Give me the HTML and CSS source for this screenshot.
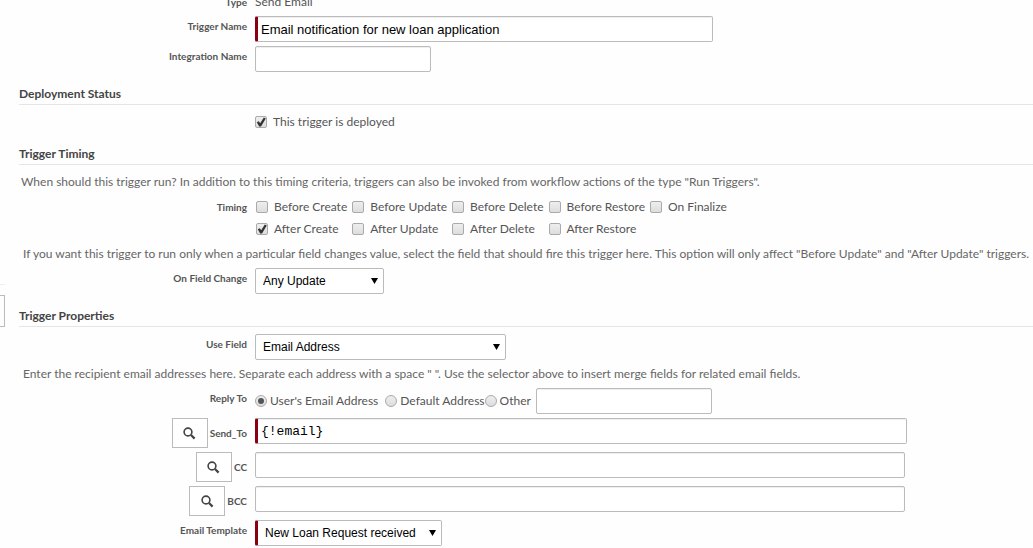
FILE: index.html
```html
<!DOCTYPE html>
<html lang="en">
<head>
<meta charset="utf-8">
<title>Trigger</title>
<link rel="stylesheet" href="styles.css">
</head>
<body>
<div class="page">
  <div class="rail"><div class="rail-box"></div></div>
  <form class="form">
    <div class="row type-row">
      <span class="label">Type</span>
      <span class="text">Send Email</span>
    </div>
    <div class="row">
      <label class="label" for="name">Trigger Name</label>
      <input class="input input-wide required" id="name" type="text" value="Email notification for new loan application">
    </div>
    <div class="row">
      <label class="label" for="integration">Integration Name</label>
      <input class="input input-short" id="integration" type="text">
    </div>

    <h2 class="heading">Deployment Status</h2>
    <div class="row deploy-row">
      <label class="option deploy"><input class="check" type="checkbox" checked>This trigger is deployed</label>
    </div>

    <h2 class="heading">Trigger Timing</h2>
    <p class="note note-first">When should this trigger run? In addition to this timing criteria, triggers can also be invoked from workflow actions of the type "Run Triggers".</p>
    <div class="row timing-row">
      <span class="label">Timing</span>
      <div class="timing">
        <label class="option"><input class="check" type="checkbox">Before Create</label>
        <label class="option"><input class="check" type="checkbox">Before Update</label>
        <label class="option"><input class="check" type="checkbox">Before Delete</label>
        <label class="option"><input class="check" type="checkbox">Before Restore</label>
        <label class="option"><input class="check" type="checkbox">On Finalize</label>
        <label class="option"><input class="check" type="checkbox" checked>After Create</label>
        <label class="option"><input class="check" type="checkbox">After Update</label>
        <label class="option"><input class="check" type="checkbox">After Delete</label>
        <label class="option"><input class="check" type="checkbox">After Restore</label>
      </div>
    </div>
    <p class="note">If you want this trigger to run only when a particular field changes value, select the field that should fire this trigger here. This option will only affect "Before Update" and "After Update" triggers.</p>
    <div class="row">
      <label class="label" for="change">On Field Change</label>
      <span class="drop drop-small"><select class="select" id="change"><option>Any Update</option></select></span>
    </div>

    <h2 class="heading">Trigger Properties</h2>
    <div class="row props-row">
      <label class="label" for="field">Use Field</label>
      <span class="drop drop-large"><select class="select" id="field"><option>Email Address</option></select></span>
    </div>
    <p class="note">Enter the recipient email addresses here. Separate each address with a space " ". Use the selector above to insert merge fields for related email fields.</p>
    <div class="row">
      <span class="label">Reply To</span>
      <div class="reply">
        <label class="choice"><input class="radio" type="radio" name="reply" checked>User's Email Address</label>
        <label class="choice choice-default"><input class="radio" type="radio" name="reply">Default Address</label>
        <label class="choice"><input class="radio" type="radio" name="reply">Other</label>
        <input class="input input-short reply-input" type="text" aria-label="Other reply address">
      </div>
    </div>
    <div class="row">
      <div class="lookup">
        <button class="find" type="button" aria-label="Find recipient"><svg class="glass" viewBox="0 0 13 13"><circle cx="5" cy="5" r="3.9"/><path class="handle" d="M8 8 11.6 11.6"/></svg></button>
        <label class="lookup-label" for="to">Send_To</label>
      </div>
      <input class="input input-to required" id="to" type="text" value="{!email}">
    </div>
    <div class="row">
      <div class="lookup">
        <button class="find" type="button" aria-label="Find CC"><svg class="glass" viewBox="0 0 13 13"><circle cx="5" cy="5" r="3.9"/><path class="handle" d="M8 8 11.6 11.6"/></svg></button>
        <label class="lookup-label" for="cc">CC</label>
      </div>
      <input class="input input-copy" id="cc" type="text">
    </div>
    <div class="row">
      <div class="lookup">
        <button class="find" type="button" aria-label="Find BCC"><svg class="glass" viewBox="0 0 13 13"><circle cx="5" cy="5" r="3.9"/><path class="handle" d="M8 8 11.6 11.6"/></svg></button>
        <label class="lookup-label" for="bcc">BCC</label>
      </div>
      <input class="input input-copy" id="bcc" type="text">
    </div>
    <div class="row">
      <label class="label" for="template">Email Template</label>
      <span class="drop drop-medium"><select class="select required" id="template"><option>New Loan Request received</option></select></span>
    </div>
  </form>
</div>
</body>
</html>
```
FILE: styles.css
```css
* {
  box-sizing: border-box;
}

body {
  margin: 0;
  overflow: hidden;
  background: #fefefe;
  color: #555;
  font: 12px/20px Lato, sans-serif;
}

.page {
  display: flex;
}

.rail {
  flex: none;
  width: 5px;
  margin-right: 14px;
  padding-top: 284px;
}

.rail-box {
  border-top: 1px solid #eee;
  padding-top: 10px;
}

.rail-box::after {
  content: "";
  display: block;
  height: 30px;
  border: 1px solid #bbb;
  border-left: 0;
}

.form {
  flex: 1;
  min-width: 0;
  margin-top: -8px;
}

.row {
  display: grid;
  grid-template-columns: 228px 1fr;
  column-gap: 8px;
  align-items: start;
  margin-bottom: 4px;
}

.label,
.lookup-label {
  font-size: 10px;
  font-weight: 700;
  line-height: 20px;
}

.label {
  text-align: right;
}

.input,
.select {
  height: 26px;
  border: 1px solid #bbb;
  border-radius: 2px;
  background: #fff;
  color: #000;
  font: 12px "Liberation Sans", Arial, sans-serif;
}

.input {
  width: 100%;
  padding: 0 3px;
  box-shadow: inset 0 1px 1px #eee;
  font-size: 13px;
}

.input.required,
.select.required {
  border-left: 3px solid #8b0010;
}

.input-wide {
  max-width: 458px;
}

.input-short {
  max-width: 176px;
}

.input-to {
  max-width: 652px;
  font-family: "Liberation Mono", "Courier New", monospace;
}

.input-copy {
  max-width: 650px;
}

.heading {
  margin: 12px 0 0;
  border-bottom: 1px solid #e5e5e5;
  color: #444;
  font-size: 12px;
  font-weight: 700;
  line-height: 20px;
}

.deploy-row {
  margin: 7px 0 0;
}

.deploy {
  grid-column: 2;
}

.note {
  margin: 0 0 4px;
  padding-left: 4px;
  color: #666;
}

.note-first {
  margin-top: 7px;
  margin-bottom: 5px;
  padding-left: 2px;
}

.option {
  display: flex;
  align-items: center;
  gap: 6px;
  white-space: nowrap;
}

.timing-row {
  margin-bottom: 5px;
}

.timing {
  display: grid;
  grid-template-columns: repeat(5, max-content);
  gap: 2px 5px;
  padding-left: 1px;
}

.check,
.radio {
  position: relative;
  flex: none;
  width: 12px;
  height: 12px;
  margin: 0;
  border: 1px solid #aaa;
  background: linear-gradient(#eee, #ddd);
  appearance: none;
}

.check {
  border-radius: 2px;
}

.radio {
  border-radius: 50%;
}

.check:checked::after {
  content: "";
  position: absolute;
  inset: 0;
  background: #333;
  clip-path: polygon(8% 52%, 28% 42%, 42% 62%, 78% 4%, 98% 14%, 50% 96%, 32% 96%);
}

.radio:checked::after {
  content: "";
  position: absolute;
  inset: 2px;
  border-radius: 50%;
  background: #555;
}

.drop {
  position: relative;
}

.drop::after {
  content: "";
  position: absolute;
  top: 10px;
  right: 6px;
  width: 7px;
  height: 6px;
  background: #000;
  clip-path: polygon(0 0, 100% 0, 50% 100%);
  pointer-events: none;
}

.drop-small {
  max-width: 129px;
}

.drop-medium {
  max-width: 187px;
}

.drop-large {
  max-width: 251px;
}

.select {
  display: block;
  width: 100%;
  padding: 0 7px;
  appearance: none;
}

.props-row {
  margin-top: 7px;
}

.reply {
  display: flex;
  align-items: center;
}

.choice {
  display: flex;
  align-items: center;
  gap: 3px;
  white-space: nowrap;
}

.choice-default {
  margin-left: 7px;
}

.reply-input {
  margin-left: 5px;
}

.lookup {
  display: flex;
  justify-content: flex-end;
  align-items: center;
  gap: 2px;
}

.find {
  display: flex;
  align-items: center;
  justify-content: center;
  width: 36px;
  height: 30px;
  padding: 0;
  border: 1px solid #bbb;
  background: #fff;
}

.glass {
  width: 13px;
  height: 13px;
  fill: none;
  stroke: #444;
  stroke-width: 1.6;
}

.handle {
  stroke-width: 2.2;
}
```
